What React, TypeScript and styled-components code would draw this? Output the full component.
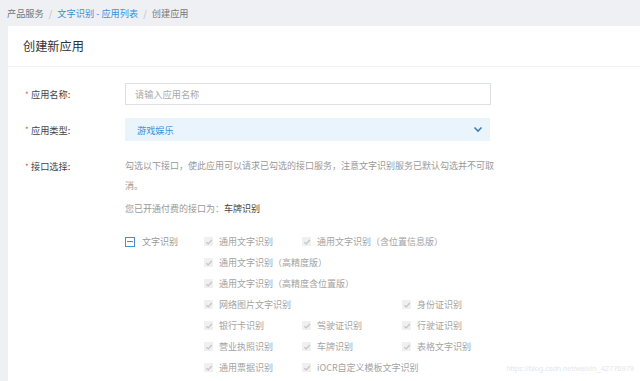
import React from "react";
import styled, { createGlobalStyle } from "styled-components";

const Global = createGlobalStyle`
  html, body { margin: 0; padding: 0; }
  *, *::before, *::after { box-sizing: border-box; }
  body {
    background: #eef0f3;
    font-family: "Noto Sans CJK SC", "Noto Sans", sans-serif;
    width: 640px;
    height: 381px;
    overflow: hidden;
  }
`;

const Page = styled.div`
  position: relative;
  width: 640px;
  height: 381px;
  overflow: hidden;
`;

const Breadcrumb = styled.div`
  height: 26px;
  display: flex;
  align-items: center;
  padding-left: 7px;
  font-size: 9.2px;
  color: #666;
  gap: 5px;
`;

const Crumb = styled.span<{ $link?: boolean }>`
  color: ${(p) => (p.$link ? "#3d8fd6" : "#777")};
`;

const Sep = styled.span`
  color: #bbb;
`;

const Card = styled.div`
  margin-left: 8px;
  width: 640px;
  background: #fff;
  height: 360px;
`;

const CardHeader = styled.div`
  height: 41px;
  display: flex;
  align-items: center;
  padding-left: 15px;
  border-bottom: 1px solid #f0f1f3;
  font-size: 12.2px;
  color: #333;
`;

const Form = styled.div`
  padding: 16px 0 0 17px;
  display: flex;
  flex-direction: column;
`;

const Row = styled.div<{ $mb: number }>`
  display: flex;
  align-items: flex-start;
  margin-bottom: ${(p) => p.$mb}px;
`;

const Label = styled.div<{ $h: number }>`
  width: 100px;
  flex: none;
  height: ${(p) => p.$h}px;
  display: flex;
  align-items: center;
  font-size: 9.2px;
  color: #444;
`;

const Star = styled.span`
  color: #e0561f;
  width: 6px;
  font-size: 8px;
`;

const Input = styled.div`
  width: 366px;
  height: 22px;
  border: 1px solid #dcdfe3;
  display: flex;
  align-items: center;
  padding-left: 9px;
  font-size: 9.2px;
  color: #aaa;
`;

const Select = styled.div`
  width: 365px;
  height: 23px;
  background: #e9f4fd;
  display: flex;
  align-items: center;
  justify-content: space-between;
  padding: 0 7px 0 12px;
  font-size: 9.2px;
  color: #3d8fd6;
`;

const Content = styled.div`
  display: flex;
  flex-direction: column;
  width: 380px;
`;

const Desc = styled.div`
  font-size: 9px;
  line-height: 20px;
  color: #999;
  margin-top: -2px;
`;

const Paid = styled.div`
  font-size: 9px;
  line-height: 20px;
  color: #999;
  margin-top: 3px;
`;

const Strong = styled.span`
  color: #444;
`;

const Tree = styled.div`
  display: flex;
  margin-top: 12px;
`;

const Parent = styled.div`
  width: 79px;
  flex: none;
  height: 21px;
  display: flex;
  align-items: center;
  gap: 7px;
  font-size: 9px;
  color: #999;
`;

const Indeterminate = styled.span`
  width: 10px;
  height: 10px;
  border: 1px solid #3d8fd6;
  display: flex;
  align-items: center;
  justify-content: center;
  &::after {
    content: "";
    width: 6px;
    height: 1.5px;
    background: #3d8fd6;
  }
`;

const Grid = styled.div`
  display: grid;
  grid-template-columns: 98px 100px 100px;
  grid-auto-rows: 21px;
`;

const Item = styled.div<{ $span?: number; $col?: number }>`
  grid-column: ${(p) => (p.$col ? `${p.$col} / span ${p.$span ?? 1}` : `span ${p.$span ?? 1}`)};
  display: flex;
  align-items: center;
  gap: 6px;
  font-size: 9px;
  color: #a3a3a3;
  white-space: nowrap;
`;

const Box = styled.span`
  width: 9px;
  height: 9px;
  background: #f0f0f0;
  display: flex;
  align-items: center;
  justify-content: center;
  flex: none;
`;

const Watermark = styled.div`
  position: absolute;
  right: 6px;
  bottom: 8px;
  font-size: 7.5px;
  color: #e6e6e6;
  font-family: "Liberation Sans", sans-serif;
`;

const Check = () => (
  <Box>
    <svg width="8" height="8" viewBox="0 0 8 8">
      <path d="M1.3 4.2 L3.2 6 L6.8 2" fill="none" stroke="#c4c4c4" strokeWidth="1.2" />
    </svg>
  </Box>
);

type It = { t: string; span?: number; col?: number };
const items: It[] = [
  { t: "通用文字识别" },
  { t: "通用文字识别（含位置信息版）", span: 2 },
  { t: "通用文字识别（高精度版）", col: 1, span: 3 },
  { t: "通用文字识别（高精度含位置版）", col: 1, span: 3 },
  { t: "网络图片文字识别", col: 1 },
  { t: "身份证识别", col: 3 },
  { t: "银行卡识别" },
  { t: "驾驶证识别" },
  { t: "行驶证识别" },
  { t: "营业执照识别" },
  { t: "车牌识别" },
  { t: "表格文字识别" },
  { t: "通用票据识别" },
  { t: "iOCR自定义模板文字识别", span: 2 },
];

export default function App() {
  return (
    <Page>
      <Global />
      <Breadcrumb>
        <Crumb>产品服务</Crumb>
        <Sep>/</Sep>
        <Crumb $link>文字识别 - 应用列表</Crumb>
        <Sep>/</Sep>
        <Crumb>创建应用</Crumb>
      </Breadcrumb>
      <Card>
        <CardHeader>创建新应用</CardHeader>
        <Form>
          <Row $mb={13}>
            <Label $h={22}>
              <Star>*</Star>应用名称:
            </Label>
            <Input>请输入应用名称</Input>
          </Row>
          <Row $mb={17}>
            <Label $h={23}>
              <Star>*</Star>应用类型:
            </Label>
            <Select>
              <span>游戏娱乐</span>
              <svg width="10" height="7" viewBox="0 0 10 7">
                <path d="M1.5 1.5 L5 5 L8.5 1.5" fill="none" stroke="#3f7fae" strokeWidth="1.6" />
              </svg>
            </Select>
          </Row>
          <Row $mb={0}>
            <Label $h={16}>
              <Star>*</Star>接口选择:
            </Label>
            <Content>
              <Desc>
                勾选以下接口，使此应用可以请求已勾选的接口服务，注意文字识别服务已默认勾选并不可取消。
              </Desc>
              <Paid>
                您已开通付费的接口为：<Strong>车牌识别</Strong>
              </Paid>
              <Tree>
                <Parent>
                  <Indeterminate />
                  文字识别
                </Parent>
                <Grid>
                  {items.map((it) => (
                    <Item key={it.t} $span={it.span} $col={it.col}>
                      <Check />
                      {it.t}
                    </Item>
                  ))}
                </Grid>
              </Tree>
            </Content>
          </Row>
        </Form>
      </Card>
      <Watermark>https://blog.csdn.net/weixin_42776979</Watermark>
    </Page>
  );
}
